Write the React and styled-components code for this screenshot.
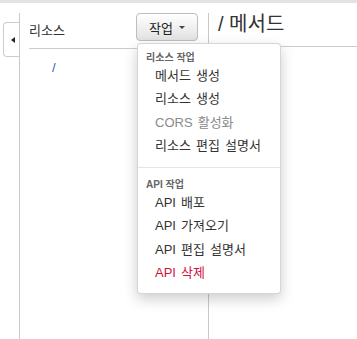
import React from 'react'
import styled, { createGlobalStyle } from 'styled-components'

const GlobalStyle = createGlobalStyle`
    html, body {
        margin: 0;
        height: 100%;
        background: #fff;
    }
    body {
        font-family: "Liberation Sans", "Noto Sans CJK KR", sans-serif;
        color: #333;
        overflow: hidden;
    }
    #root {
        height: 100%;
    }
`

const Page = styled.div`
    height: 100%;
    display: flex;
    flex-direction: column;
`
const TopStrip = styled.div`
    flex: none;
    height: 3px;
    background: #e3e3e3;
`
const Workspace = styled.div`
    flex: 1;
    display: flex;
    margin-top: 10px;
`
const TabRail = styled.div`
    flex: none;
    width: 19px;
    padding-top: 9px;
    box-sizing: border-box;
    display: flex;
    justify-content: flex-end;
    align-items: flex-start;
`
const CollapseTab = styled.button`
    width: 16px;
    height: 35px;
    padding: 0 0 0 3px;
    border: 1px solid #ccc;
    border-right: none;
    border-radius: 4px 0 0 4px;
    background: #fff;
    display: flex;
    align-items: center;
    justify-content: center;
    cursor: pointer;
    &::before {
        content: '';
        border-right: 4px solid #222;
        border-top: 3.5px solid transparent;
        border-bottom: 3.5px solid transparent;
    }
`
const ResourcePanel = styled.div`
    flex: none;
    width: 190px;
    box-sizing: border-box;
    border-left: 1px solid #c8c8c8;
    border-right: 1px solid #c8c8c8;
    padding-left: 9px;
`
const PanelHeader = styled.div`
    height: 35px;
    padding-right: 10px;
    border-bottom: 1px solid #ccc;
    display: flex;
    justify-content: space-between;
    align-items: flex-start;
`
const PanelLabel = styled.span`
    margin-top: 9px;
    font-size: 13px;
    line-height: 17px;
`
const ActionWrap = styled.div`
    position: relative;
`
const ActionButton = styled.button`
    width: 62px;
    height: 28px;
    padding: 0;
    border: 1px solid #bdbdbd;
    border-radius: 4px;
    background: linear-gradient(180deg, #ffffff 0%, #e2e2e2 100%);
    box-shadow: inset 0 1px 0 rgba(255,255,255,.6);
    font-family: inherit;
    font-size: 13px;
    color: #222;
    display: flex;
    align-items: center;
    justify-content: center;
    gap: 6px;
    &::after {
        content: '';
        border-top: 3.5px solid #444;
        border-left: 3px solid transparent;
        border-right: 3px solid transparent;
        margin-top: 1px;
    }
`
const Tree = styled.div`
    padding: 9px 0 0 23px;
`
const TreeNode = styled.span`
    font-size: 13px;
    line-height: 17px;
    color: #2266bb;
`
const MethodPanel = styled.div`
    flex: 1;
`
const MethodHeader = styled.div`
    height: 33px;
    padding-left: 9px;
    border-bottom: 1px solid #ccc;
`
const MethodTitle = styled.span`
    font-size: 20px;
    line-height: 22px;
    color: #333;
`
const Menu = styled.ul`
    position: absolute;
    top: 30px;
    left: 1px;
    z-index: 10;
    width: 144px;
    box-sizing: border-box;
    margin: 0;
    padding: 7px 0 9px;
    list-style: none;
    background: #fff;
    border: 1px solid rgba(0,0,0,.16);
    border-radius: 4px;
    box-shadow: 0 5px 14px rgba(0,0,0,.2);
`
const MenuHeader = styled.li`
    padding-left: 8px;
    font-size: 10px;
    font-weight: 600;
    line-height: 13px;
    color: #666;
`
const MenuItem = styled.li`
    padding-left: 17px;
    font-size: 13px;
    line-height: 23.3px;
    word-spacing: 1.5px;
    white-space: nowrap;
    color: ${props => props.danger ? '#d1113c' : props.disabled ? '#8a8a8a' : '#333'};
    cursor: ${props => props.disabled ? 'default' : 'pointer'};
`
const MenuDivider = styled.li`
    height: 1px;
    margin: 10px 0;
    background: #e5e5e5;
`

const resourceActions = [
    { label: '메서드 생성' },
    { label: '리소스 생성' },
    { label: 'CORS 활성화', disabled: true },
    { label: '리소스 편집 설명서' },
]
const apiActions = [
    { label: 'API 배포' },
    { label: 'API 가져오기' },
    { label: 'API 편집 설명서' },
    { label: 'API 삭제', danger: true },
]

const App = () => {
    return (
        <Page>
            <GlobalStyle />
            <TopStrip />
            <Workspace>
                <TabRail>
                    <CollapseTab aria-label="collapse" />
                </TabRail>
                <ResourcePanel>
                    <PanelHeader>
                        <PanelLabel>리소스</PanelLabel>
                        <ActionWrap>
                            <ActionButton>작업</ActionButton>
                            <Menu>
                                <MenuHeader>리소스 작업</MenuHeader>
                                { resourceActions.map(a => (
                                    <MenuItem key={a.label} disabled={a.disabled} danger={a.danger}>{a.label}</MenuItem>
                                )) }
                                <MenuDivider />
                                <MenuHeader>API 작업</MenuHeader>
                                { apiActions.map(a => (
                                    <MenuItem key={a.label} disabled={a.disabled} danger={a.danger}>{a.label}</MenuItem>
                                )) }
                            </Menu>
                        </ActionWrap>
                    </PanelHeader>
                    <Tree>
                        <TreeNode>/</TreeNode>
                    </Tree>
                </ResourcePanel>
                <MethodPanel>
                    <MethodHeader>
                        <MethodTitle>/ 메서드</MethodTitle>
                    </MethodHeader>
                </MethodPanel>
            </Workspace>
        </Page>
    )
}

export default App
